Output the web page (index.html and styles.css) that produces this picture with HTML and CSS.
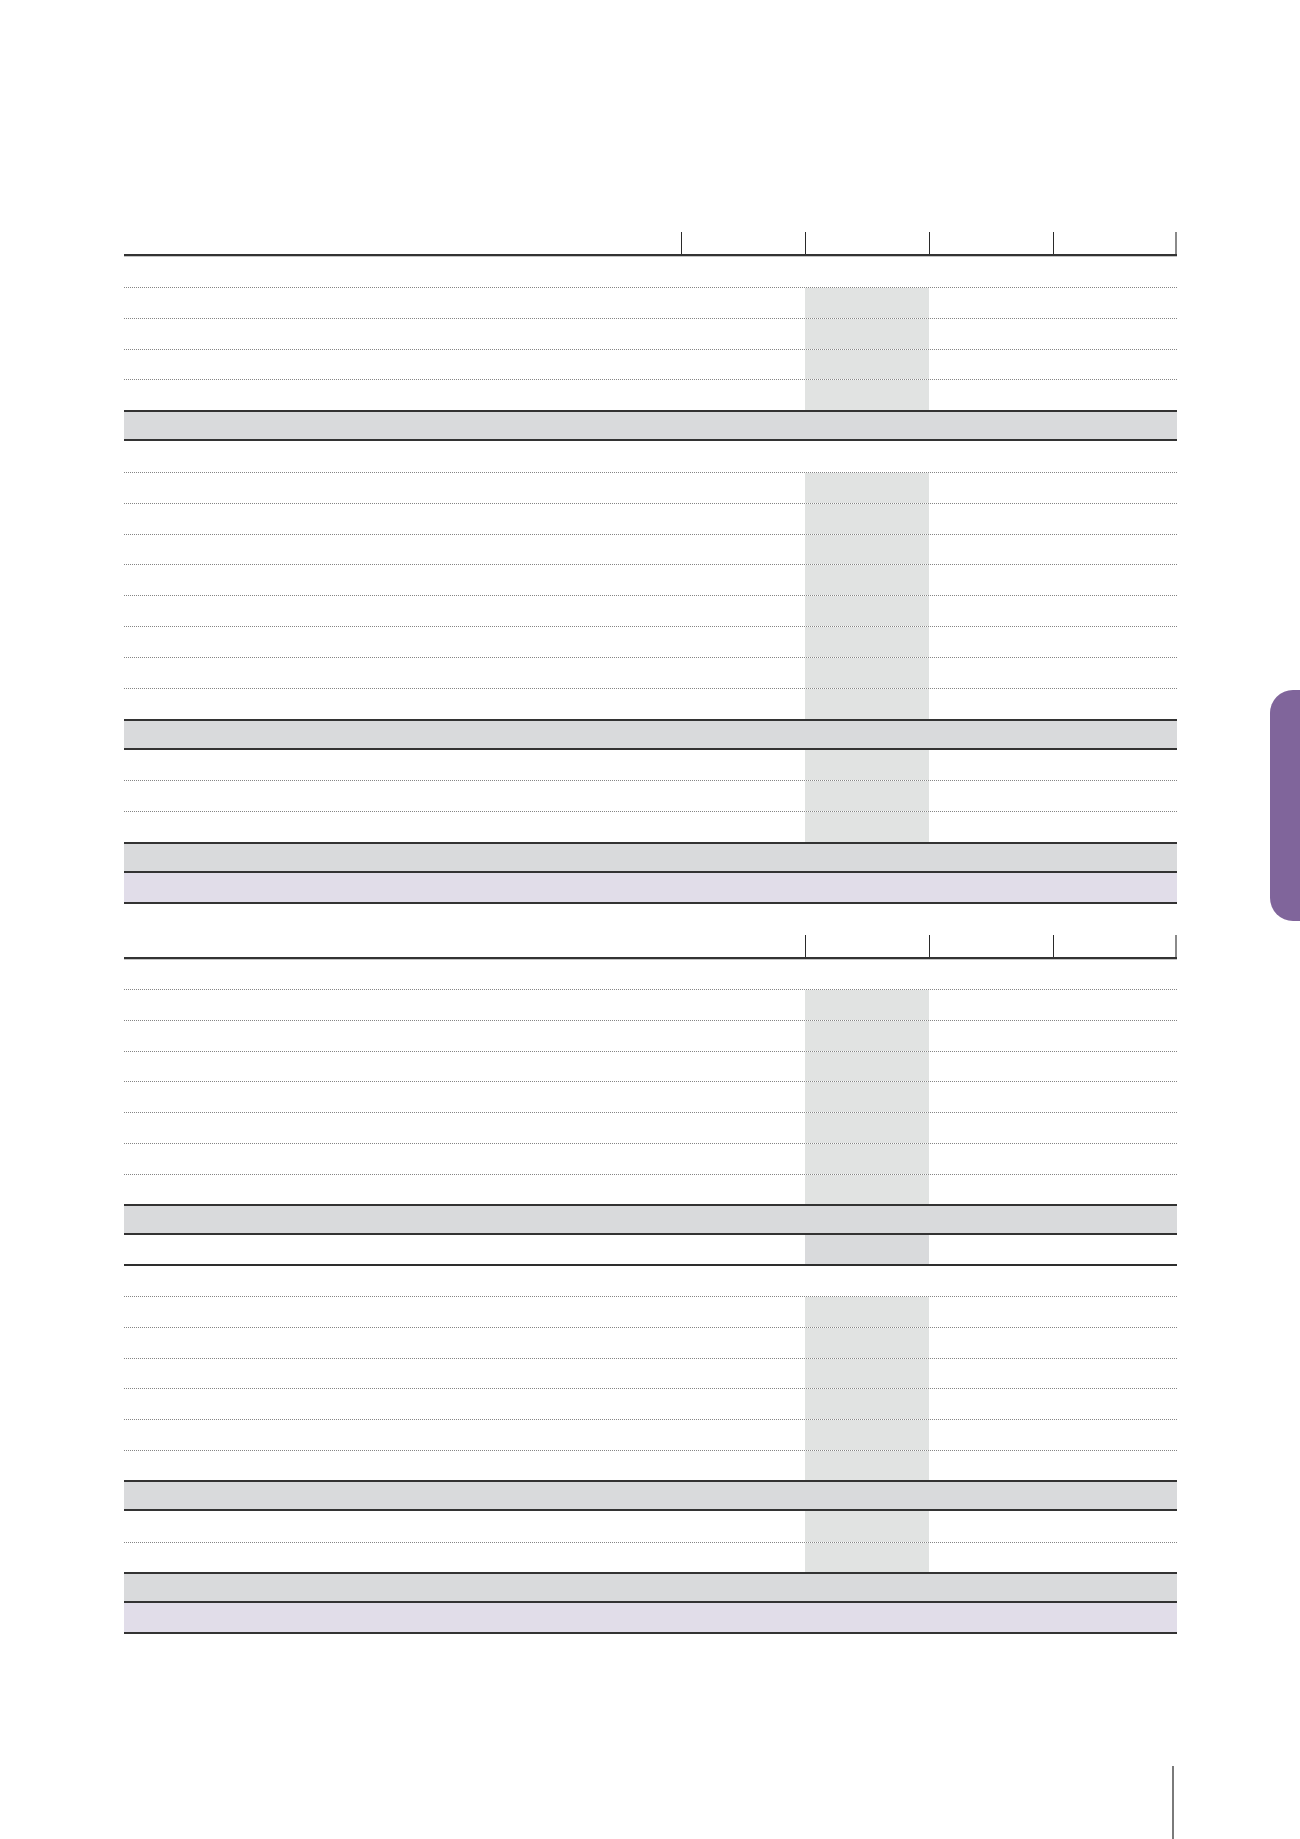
FILE: index.html
```html
<!DOCTYPE html>
<html lang="en">
<head>
<meta charset="utf-8">
<title>Table</title>
<link rel="stylesheet" href="styles.css">
</head>
<body>
<div class="page">
  <div class="main">
    <div class="tbl first">
      <div class="hd"><div class="c"></div><div class="c tk"></div><div class="c tk"></div><div class="c tk"></div><div class="c tk last"></div></div>
      <div class="row"><div class="c"></div><div class="c"></div><div class="c"></div><div class="c"></div><div class="c"></div></div>
      <div class="row dt sh"><div class="c"></div><div class="c"></div><div class="c"></div><div class="c"></div><div class="c"></div></div>
      <div class="row dt sh"><div class="c"></div><div class="c"></div><div class="c"></div><div class="c"></div><div class="c"></div></div>
      <div class="row dt sh"><div class="c"></div><div class="c"></div><div class="c"></div><div class="c"></div><div class="c"></div></div>
      <div class="row dt sh"><div class="c"></div><div class="c"></div><div class="c"></div><div class="c"></div><div class="c"></div></div>
      <div class="band"></div>
      <div class="row"><div class="c"></div><div class="c"></div><div class="c"></div><div class="c"></div><div class="c"></div></div>
      <div class="row dt sh"><div class="c"></div><div class="c"></div><div class="c"></div><div class="c"></div><div class="c"></div></div>
      <div class="row dt sh"><div class="c"></div><div class="c"></div><div class="c"></div><div class="c"></div><div class="c"></div></div>
      <div class="row dt sh"><div class="c"></div><div class="c"></div><div class="c"></div><div class="c"></div><div class="c"></div></div>
      <div class="row dt sh"><div class="c"></div><div class="c"></div><div class="c"></div><div class="c"></div><div class="c"></div></div>
      <div class="row dt sh"><div class="c"></div><div class="c"></div><div class="c"></div><div class="c"></div><div class="c"></div></div>
      <div class="row dt sh"><div class="c"></div><div class="c"></div><div class="c"></div><div class="c"></div><div class="c"></div></div>
      <div class="row dt sh"><div class="c"></div><div class="c"></div><div class="c"></div><div class="c"></div><div class="c"></div></div>
      <div class="row dt sh"><div class="c"></div><div class="c"></div><div class="c"></div><div class="c"></div><div class="c"></div></div>
      <div class="band"></div>
      <div class="row sh"><div class="c"></div><div class="c"></div><div class="c"></div><div class="c"></div><div class="c"></div></div>
      <div class="row dt sh"><div class="c"></div><div class="c"></div><div class="c"></div><div class="c"></div><div class="c"></div></div>
      <div class="row dt sh"><div class="c"></div><div class="c"></div><div class="c"></div><div class="c"></div><div class="c"></div></div>
      <div class="band"></div>
      <div class="total"></div>
    </div>

    <div class="tbl second">
      <div class="hd"><div class="c"></div><div class="c"></div><div class="c tk"></div><div class="c tk"></div><div class="c tk last"></div></div>
      <div class="row"><div class="c"></div><div class="c"></div><div class="c"></div><div class="c"></div><div class="c"></div></div>
      <div class="row dt sh"><div class="c"></div><div class="c"></div><div class="c"></div><div class="c"></div><div class="c"></div></div>
      <div class="row dt sh"><div class="c"></div><div class="c"></div><div class="c"></div><div class="c"></div><div class="c"></div></div>
      <div class="row dt sh"><div class="c"></div><div class="c"></div><div class="c"></div><div class="c"></div><div class="c"></div></div>
      <div class="row dt sh"><div class="c"></div><div class="c"></div><div class="c"></div><div class="c"></div><div class="c"></div></div>
      <div class="row dt sh"><div class="c"></div><div class="c"></div><div class="c"></div><div class="c"></div><div class="c"></div></div>
      <div class="row dt sh"><div class="c"></div><div class="c"></div><div class="c"></div><div class="c"></div><div class="c"></div></div>
      <div class="row dt sh"><div class="c"></div><div class="c"></div><div class="c"></div><div class="c"></div><div class="c"></div></div>
      <div class="band"></div>
      <div class="row net"><div class="c"></div><div class="c"></div><div class="c"></div><div class="c"></div><div class="c"></div></div>
      <div class="row"><div class="c"></div><div class="c"></div><div class="c"></div><div class="c"></div><div class="c"></div></div>
      <div class="row dt sh"><div class="c"></div><div class="c"></div><div class="c"></div><div class="c"></div><div class="c"></div></div>
      <div class="row dt sh"><div class="c"></div><div class="c"></div><div class="c"></div><div class="c"></div><div class="c"></div></div>
      <div class="row dt sh"><div class="c"></div><div class="c"></div><div class="c"></div><div class="c"></div><div class="c"></div></div>
      <div class="row dt sh"><div class="c"></div><div class="c"></div><div class="c"></div><div class="c"></div><div class="c"></div></div>
      <div class="row dt sh"><div class="c"></div><div class="c"></div><div class="c"></div><div class="c"></div><div class="c"></div></div>
      <div class="row dt sh"><div class="c"></div><div class="c"></div><div class="c"></div><div class="c"></div><div class="c"></div></div>
      <div class="band"></div>
      <div class="row sh"><div class="c"></div><div class="c"></div><div class="c"></div><div class="c"></div><div class="c"></div></div>
      <div class="row dt sh"><div class="c"></div><div class="c"></div><div class="c"></div><div class="c"></div><div class="c"></div></div>
      <div class="band"></div>
      <div class="total"></div>
    </div>

    <div class="folio"><div class="folio-line"></div></div>
  </div>
  <div class="aside"><div class="tab"></div></div>
</div>
</body>
</html>
```

FILE: styles.css
```css
html, body {
  margin: 0;
  padding: 0;
  background: #ffffff;
  font-family: "Liberation Sans", Arial, sans-serif;
}
body {
  width: 1300px;
  height: 1839px;
  overflow: hidden;
}
.page {
  display: flex;
  padding: 232px 0 0 124px;
  box-sizing: border-box;
  width: 1300px;
  height: 1839px;
}
.main {
  width: 1053px;
  display: flex;
  flex-direction: column;
}
.aside {
  margin-left: auto;
  width: 30px;
}
.tab {
  margin-top: 458px;
  width: 30px;
  height: 231px;
  background: #80659b;
  border-radius: 23px 0 0 23px;
}
.tbl {
  display: flex;
  flex-direction: column;
  --rh: 30.85px;
}
.tbl.second {
  margin-top: 31px;
  --rh: 30.7px;
}
.hd, .row {
  display: grid;
  grid-template-columns: 557px 124px 124px 124px 124px;
}
.hd {
  height: 24px;
  box-sizing: border-box;
  border-bottom: 2px solid #333333;
  box-shadow: 0 1px 0 #c4c4c4;
}
.hd .tk {
  border-left: 1px solid #2a2a2a;
}
.hd .last {
  border-right: 2px solid #8a8a8a;
}
.row {
  height: var(--rh);
  box-sizing: border-box;
}
.row.dt {
  border-top: 1px dotted #858585;
}
.row.sh .c:nth-child(3) {
  background: #e1e3e2;
}
.row.net {
  border-bottom: 2px solid #2e2e2e;
}
.row.net .c:nth-child(3) {
  background: #d9dadc;
}
.band {
  height: var(--rh);
  box-sizing: border-box;
  background: #d9dadc;
  border-top: 2px solid #333333;
  border-bottom: 2px solid #333333;
}
.total {
  height: var(--rh);
  box-sizing: border-box;
  background: #e1dde9;
  border-bottom: 2px solid #333333;
}
.folio {
  margin-top: auto;
  padding-left: 1048px;
}
.folio-line {
  width: 2px;
  height: 73px;
  background: #7a7a7a;
}
```
